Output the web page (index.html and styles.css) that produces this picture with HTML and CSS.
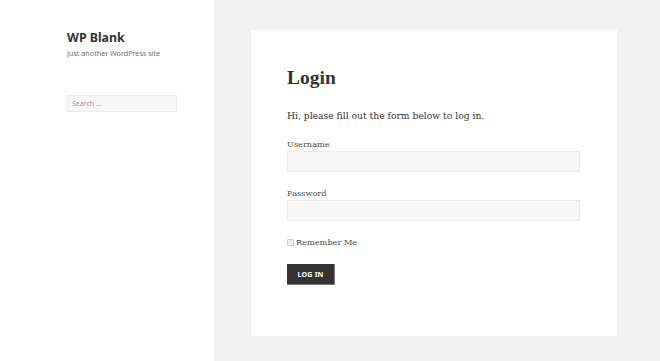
FILE: index.html
```html
<!DOCTYPE html>
<html lang="en">
<head>
<meta charset="utf-8">
<title>Login – WP Blank</title>
<link rel="stylesheet" href="styles.css">
</head>
<body>
<div class="page">
  <aside class="sidebar">
    <div class="site-title">WP Blank</div>
    <div class="site-desc">Just another WordPress site</div>
    <div class="search">Search …</div>
  </aside>
  <main class="main">
    <article class="card">
      <h1 class="title">Login</h1>
      <p class="intro">Hi, please fill out the form below to log in.</p>
      <div class="field">
        <label class="label">Username</label>
        <div class="input"></div>
      </div>
      <div class="field">
        <label class="label">Password</label>
        <div class="input"></div>
      </div>
      <div class="remember"><span class="check"></span>Remember Me</div>
      <div class="button">LOG IN</div>
    </article>
  </main>
</div>
</body>
</html>
```
FILE: styles.css
```css
html, body {
  margin: 0;
  padding: 0;
  background: #f1f1f1;
}
body {
  font-family: "DejaVu Serif", serif;
  color: #333;
}
.page {
  display: flex;
  height: 361px;
}
.sidebar {
  width: 214px;
  flex: none;
  background: #fff;
  padding: 29px 0 0 67px;
  box-sizing: border-box;
  box-shadow: 0 0 1px rgba(0,0,0,0.15);
  font-family: "Noto Sans", sans-serif;
}
.site-title {
  font-size: 12.3px;
  line-height: 18px;
  font-weight: 700;
  color: #333;
}
.site-desc {
  margin-top: 1px;
  font-size: 7.2px;
  line-height: 10px;
  color: #707070;
}
.search {
  margin-top: 37px;
  width: 110px;
  height: 17px;
  box-sizing: border-box;
  border: 1px solid #eaeaea;
  background: #f7f7f7;
  color: #9a9a9a;
  font-size: 7px;
  line-height: 15px;
  padding-left: 4px;
}
.main {
  flex: 1;
  padding: 30px 0 0 37px;
}
.card {
  width: 366px;
  box-sizing: border-box;
  background: #fff;
  padding: 36px 37px 51px 36px;
}
.title {
  margin: 0;
  font-family: "Liberation Serif", serif;
  font-size: 19.5px;
  line-height: 24px;
  font-weight: 700;
  color: #333;
}
.intro {
  margin: 19px 0 0;
  font-size: 9.2px;
  line-height: 14px;
}
.field {
  margin-top: 15px;
}
.label {
  display: block;
  font-size: 8.2px;
  line-height: 12px;
  color: #4a4a4a;
}
.input {
  margin-top: 1px;
  height: 21px;
  box-sizing: border-box;
  border: 1px solid #eaeaea;
  background: #f7f7f7;
}
.remember {
  margin-top: 15px;
  font-size: 8.2px;
  line-height: 12px;
  display: flex;
  align-items: center;
  color: #4a4a4a;
}
.check {
  width: 5px;
  height: 5px;
  border: 1px solid #ccc;
  background: #eee;
  border-radius: 1px;
  margin-right: 2px;
}
.button {
  margin-top: 16px;
  width: 48px;
  height: 21px;
  box-sizing: border-box;
  background: #333;
  border-right: 1px solid #777;
  border-bottom: 1px solid #777;
  color: #fff;
  font-family: "Noto Sans", sans-serif;
  font-size: 7.2px;
  font-weight: 700;
  letter-spacing: 0.02em;
  line-height: 20px;
  text-align: center;
}
```
